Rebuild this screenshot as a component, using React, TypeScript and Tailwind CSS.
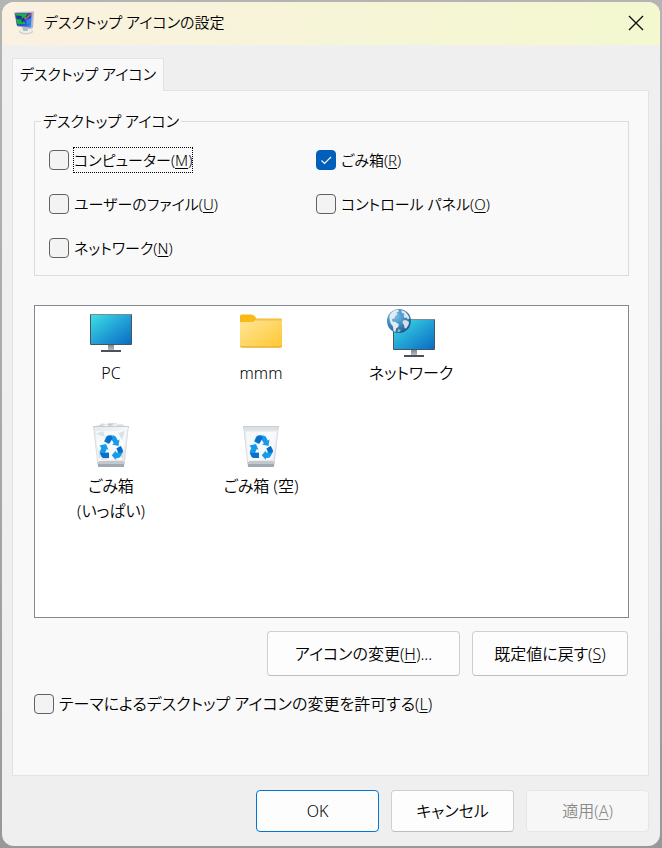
import { useState } from "react";
import type { ReactNode } from "react";

function Mnemonic({ k }: { k: string }) {
  return (
    <>
      (<span className="underline decoration-1 underline-offset-2">{k}</span>)
    </>
  );
}

function CheckBox({
  id,
  initial = false,
  focused = false,
  children,
}: {
  id: string;
  initial?: boolean;
  focused?: boolean;
  children: ReactNode;
}) {
  const [checked, setChecked] = useState(initial);
  return (
    <div className="flex h-6 items-center gap-1">
      <span className="grid size-5 shrink-0 place-items-center">
        <input
          id={id}
          type="checkbox"
          checked={checked}
          onChange={(e) => setChecked(e.target.checked)}
          className="col-start-1 row-start-1 size-5 appearance-none rounded border border-[#626262] bg-[#f3f3f3] checked:border-[#005fb8] checked:bg-[#005fb8]"
        />
        {checked && (
          <svg viewBox="0 0 20 20" className="pointer-events-none col-start-1 row-start-1 size-5" fill="none" stroke="#fff" strokeWidth="1.1">
            <path d="M5.5 10.5 8.5 13.5 15 7" />
          </svg>
        )}
      </span>
      <label
        htmlFor={id}
        className={
          focused
            ? "whitespace-nowrap border border-dotted border-black leading-6"
            : "whitespace-nowrap border border-transparent leading-6"
        }
      >
        {children}
      </label>
    </div>
  );
}

function Screen({ id }: { id: string }) {
  return (
    <>
      <defs>
        <linearGradient id={id} x1="0" y1="0" x2="1" y2="1">
          <stop offset="0" stopColor="#3ce0e6" />
          <stop offset="0.5" stopColor="#22a3d6" />
          <stop offset="1" stopColor="#0a6cc4" />
        </linearGradient>
        <linearGradient id={id + "-stand"} x1="0" y1="0" x2="0" y2="1">
          <stop offset="0" stopColor="#76808a" />
          <stop offset="1" stopColor="#b4bcc4" />
        </linearGradient>
      </defs>
      <path d="M21 36h6v6h-6z" fill={`url(#${id}-stand)`} />
      <path d="M14 42h20v2H14z" fill="#4a5158" />
      <rect x="3" y="6" width="42" height="31" rx="1" fill="#48545e" />
      <path d="M3.500 6h41v1h-41z" fill="#7b8a94" />
      <rect x="4" y="7" width="40" height="29" fill={`url(#${id})`} />
    </>
  );
}

function PcIcon() {
  return (
    <svg viewBox="0 0 48 48" className="size-12">
      <Screen id="pc" />
    </svg>
  );
}

function FolderIcon() {
  return (
    <svg viewBox="0 0 48 48" className="size-12">
      <defs>
        <linearGradient id="folder" x1="0" y1="0" x2="1" y2="1">
          <stop offset="0" stopColor="#ffe69b" />
          <stop offset="1" stopColor="#ffc832" />
        </linearGradient>
      </defs>
      <path d="M3 8q0-1.500 1.500-1.500H14q2 0 3.500 1.500l2 2.500h24q1.500 0 1.500 1.500v6H3z" fill="#fbb917" />
      <path d="M3 15q0-1 1.500-1H15q1.500 0 3-1.500l1.500-1.500h24q1.500 0 1.500 1.500V37.500q0 2-1.500 2h-39Q3 39.500 3 37.500z" fill="url(#folder)" />
      <path d="M3 37.200q0 2.300 1.500 2.300h39q1.500 0 1.500-2.300-.3 1.300-1.500 1.300h-39q-1.200 0-1.500-1.300z" fill="#e0a020" />
      <path d="M19.500 11h24q1.200 0 1.500 1v.5H18.500z" fill="#e9b43a" opacity=".7" />
    </svg>
  );
}

function NetworkIcon() {
  return (
    <svg viewBox="0 0 48 48" className="size-12 overflow-visible">
      <defs>
        <radialGradient id="globe" cx="0.35" cy="0.3" r="0.8">
          <stop offset="0" stopColor="#7cc0e8" />
          <stop offset="0.55" stopColor="#3b87bd" />
          <stop offset="1" stopColor="#1d4f80" />
        </radialGradient>
      </defs>
      <g transform="translate(3 5)">
        <Screen id="net" />
      </g>
      <circle cx="12" cy="13" r="12" fill="url(#globe)" />
      <path d="M2.500 7Q6 2 11 1.600l1 1.900-2.500 1 1 2-2.500 1.500-.5 2.500-2.500.5.5 2.500 3 .5 3.500 2.500-1 2.500-2 1.500-.5 3.500-2-1-.5-4.500-2.500-3.500-1-4z" fill="#e4ebef" />
      <path d="M14 2.200l4 1.300 3 3.500 1.500 3-1.500 1.500-1.500-2-2 .5-1-2.500 1-1.500-2.500-1z" fill="#dfe8ee" />
      <path d="M16 12.500l3-.5 3 2-.5 3-2.500 3.500-1.500-.5-.5-3-1.500-2z" fill="#d3dfe7" />
      <path d="M11 21l3 1-1.500 2h-2z" fill="#bfd2df" opacity=".7" />
    </svg>
  );
}

function BinIcon({ id, full = false }: { id: string; full?: boolean }) {
  return (
    <svg viewBox="0 0 48 48" className="size-12">
      <defs>
        <linearGradient id={id} x1="0" y1="0" x2="1" y2="1">
          <stop offset="0" stopColor="#e6e9ed" />
          <stop offset="0.5" stopColor="#f4f6f8" />
          <stop offset="1" stopColor="#dce0e5" />
        </linearGradient>
      </defs>
      {full && (
        <>
          <path d="M7 9l1-4 4-1 3-2 4 1 3-1.500 4 1 3-1 3 2 4-1 1 2 4 1v4l-14 3z" fill="#e6e9ec" />
          <path d="M11 5l4 1 2-3zM20 3l3 3 4-4zM30 4l2 3 5-2zM14 8l6-1-2-2z" fill="#c8cdd3" />
          <path d="M16 5l3 3 2-4zM26 5l2 3 2-4z" fill="#fff" />
        </>
      )}
      <path d="M6.500 6l4 36h27l4-36z" fill={`url(#${id})`} />
      <path d="M8.500 10l3.500 29h24l3.500-29z" fill="#fbfcfd" opacity=".65" />
      {!full && (
        <>
          <path d="M6.500 5h35v2l-1 3h-33l-1-3z" fill="#dcdfe4" />
          <path d="M8 9.500h32l-1.500 1.500h-29z" fill="#eceff2" />
        </>
      )}
      {full && (
        <>
          <path d="M9 13l7-3 2 6zM31 12l7-2-3 9zM11 29l6 2-5 7zM31 33l6-4-1 9zM17 34l5 4-8 1zM25 37l6-2-1 4z" fill="#d6dbe0" opacity=".8" />
          <path d="M17 13l5-3-1 6zM31 22l6-1-3 6zM11 21l4 4-3 3zM22 36l6 1-5 2z" fill="#fff" />
        </>
      )}
      <path d="M10.500 41h27l-.5 4.500q0 .5-1 .5H12q-1 0-1-.5z" fill="#a3a9b1" />
      <path d="M10.300 43l1.700-3h24l1.700 3z" fill="#c3c8ce" />
      <path d="M6.500 7V5.500h35V7" fill="none" stroke="#c8cdd2" strokeWidth="1" />
      <path d="M6.800 7l4 36M41.200 7l-4 36" stroke="#d3d7dc" strokeWidth=".8" />
      <g transform="translate(0 -1)">
        <path d="M19 17q1-1.500 3-1.500h4.500q1.500 0 2.500 1.500l1.800 3.500 1.700-1-1 6.500-6.500-1.500 1.800-1.200-2.300-3.800-3 4.500-4.500-2.500z" fill="#169bea" />
        <path d="M20 16q.8-.5 2-.5h2.500l1 3-3 5-4.500-2.500z" fill="#0a6fc9" />
        <path d="M12.500 25.500l6.500-1.500 2.500 6-1.800-1-1.500 3.500h3.800v5.500h-4.500q-2 0-3-1.500l-1.500-3q-.5-1.500.3-3l1-2.500z" fill="#169bea" />
        <path d="M13 33h9v5h-4.500q-2 0-3-1.500z" fill="#0a6fc9" />
        <path d="M29.500 28.500l4.200-2.500 1.800 3.500q.7 1.500 0 3l-1.700 3.500q-1 2-3 2h-2v2l-4-4.800 4-4.700v2h2.200z" fill="#169bea" />
        <path d="M29.500 28.500l4.200-2.500 1.800 3.500q.7 1.500 0 3l-3.500.5z" fill="#0a6fc9" />
      </g>
    </svg>
  );
}

function AppIcon() {
  return (
    <svg viewBox="0 0 24 24" className="size-6" aria-hidden="true">
      <defs>
        <linearGradient id="app-screen" x1="0" y1="0" x2="1" y2="1">
          <stop offset="0" stopColor="#2334b8" />
          <stop offset="0.6" stopColor="#1546d8" />
          <stop offset="1" stopColor="#4c9cf5" />
        </linearGradient>
      </defs>
      <ellipse cx="14" cy="20.500" rx="7" ry="3" fill="#cfd1d4" />
      <ellipse cx="14" cy="19.800" rx="6" ry="2.200" fill="#f0f1f2" />
      <path d="M10.500 16h5l.5 4h-5z" fill="#b7babd" />
      <path d="M2 1.500l3.500-.5 16.500-.5-1 16.500-3 1-13-2.500z" fill="#b3b7c2" />
      <path d="M3 2.500l16.500-.5-.5 14.500L5 14.500z" fill="url(#app-screen)" />
      <path d="M3.500 3l12.500-.5-2.500 3 1 2.500-3 1 2 4-6.500.5-2.500-1.500z" fill="#20b03d" />
      <path d="M4 4.500l6 .5-1 3.500-4.500-.5zM9 8l3-1.500 1 3-3 2z" fill="#1b33a6" />
      <path d="M13 8.500l6.500-6" stroke="#e0563c" strokeWidth="1.600" />
      <path d="M14 9l5-2-.3 5-4 1z" fill="#3fa2ee" opacity=".6" />
    </svg>
  );
}

function DesktopItem({ icon, children }: { icon: ReactNode; children: ReactNode }) {
  return (
    <li className="flex h-[113px] flex-col items-center gap-[5px] pt-0.5 text-center leading-[25px]">
      {icon}
      <span className="whitespace-nowrap">{children}</span>
    </li>
  );
}

const button = "rounded border border-[#d0d0d0] border-b-[#bdbdbd] bg-[#fdfdfd] whitespace-nowrap";

export default function App() {
  return (
    <div className="flex min-h-screen flex-col bg-[linear-gradient(to_bottom,#b4b4b4,#a8a8a8_50%,#989898)] p-0.5 font-['Noto_Sans','Noto_Sans_CJK_JP',sans-serif] text-base font-[350] text-black [font-feature-settings:'palt']">
      <main className="flex grow flex-col overflow-hidden rounded-xl bg-[#efefef]">
        <header className="flex h-[43px] shrink-0 items-center bg-linear-to-r from-[#faf1e0] to-[#f3f8cf] pr-3.5 pb-0.5 pl-2.5">
          <AppIcon />
          <h1 className="ml-2 grow text-[15px]">デスクトップ アイコンの設定</h1>
          <button type="button" aria-label="閉じる" className="grid size-5 place-items-center">
            <svg viewBox="0 0 16 16" className="size-4" fill="none" stroke="#111" strokeWidth="1.400">
              <path d="M1 1l14 14M15 1 1 15" />
            </svg>
          </button>
        </header>

        <div className="flex grow flex-col pt-[13px] pr-[11px] pl-2.5">
          <div role="tablist" className="z-10 -mb-px flex">
            <button
              type="button"
              role="tab"
              aria-selected="true"
              className="h-[33px] border border-b-0 border-[#e3e3e3] bg-[#f9f9f9] px-[7px] pb-0.5 text-[15px] whitespace-nowrap"
            >
              デスクトップ アイコン
            </button>
          </div>

          <section role="tabpanel" className="grow border border-[#e3e3e3] bg-[#f9f9f9] pt-[18px] pr-[19px] pl-[21px]">
            <fieldset className="border border-[#dcdcdc] px-3.5 pb-[15px]">
              <legend className="-ml-2 px-0.5 text-[15px] leading-6">デスクトップ アイコン</legend>
              <div className="grid grid-cols-[267px_1fr] gap-y-5 pt-[15px] text-[15px]">
                <CheckBox id="computer" focused>
                  コンピューター
                  <Mnemonic k="M" />
                </CheckBox>
                <CheckBox id="bin" initial>
                  ごみ箱
                  <Mnemonic k="R" />
                </CheckBox>
                <CheckBox id="files">
                  ユーザーのファイル
                  <Mnemonic k="U" />
                </CheckBox>
                <CheckBox id="control">
                  コントロール パネル
                  <Mnemonic k="O" />
                </CheckBox>
                <CheckBox id="network">
                  ネットワーク
                  <Mnemonic k="N" />
                </CheckBox>
              </div>
            </fieldset>

            <ul className="mt-[29px] grid min-h-[313px] grid-cols-[repeat(auto-fill,150px)] content-start border border-[#828790] bg-white pl-px">
              <DesktopItem icon={<PcIcon />}>PC</DesktopItem>
              <DesktopItem icon={<FolderIcon />}>mmm</DesktopItem>
              <DesktopItem icon={<NetworkIcon />}>ネットワーク</DesktopItem>
              <DesktopItem icon={<BinIcon id="bin-full" full />}>
                ごみ箱
                <br />
                (いっぱい)
              </DesktopItem>
              <DesktopItem icon={<BinIcon id="bin-empty" />}>ごみ箱 (空)</DesktopItem>
            </ul>

            <div className="mt-[13px] flex justify-end gap-3 pr-px">
              <button type="button" className={`${button} h-[45px] w-[193px]`}>
                アイコンの変更
                <Mnemonic k="H" />
                ...
              </button>
              <button type="button" className={`${button} h-[45px] w-[156px]`}>
                既定値に戻す
                <Mnemonic k="S" />
              </button>
            </div>

            <div className="mt-4">
              <CheckBox id="themes">
                テーマによるデスクトップ アイコンの変更を許可する
                <Mnemonic k="L" />
              </CheckBox>
            </div>
          </section>

          <footer className="flex justify-end gap-3 pt-3.5 pb-3.5">
            <button type="button" className="h-[42px] w-[123px] rounded border border-[#0078d4] bg-[#fdfdfd]">
              OK
            </button>
            <button type="button" className={`${button} h-[42px] w-[123px]`}>
              キャンセル
            </button>
            <button
              type="button"
              disabled
              className="h-[42px] w-[123px] rounded border border-[#e6e6e6] bg-[#f7f7f7] text-[#8a8a8a]"
            >
              適用
              <Mnemonic k="A" />
            </button>
          </footer>
        </div>
      </main>
    </div>
  );
}
